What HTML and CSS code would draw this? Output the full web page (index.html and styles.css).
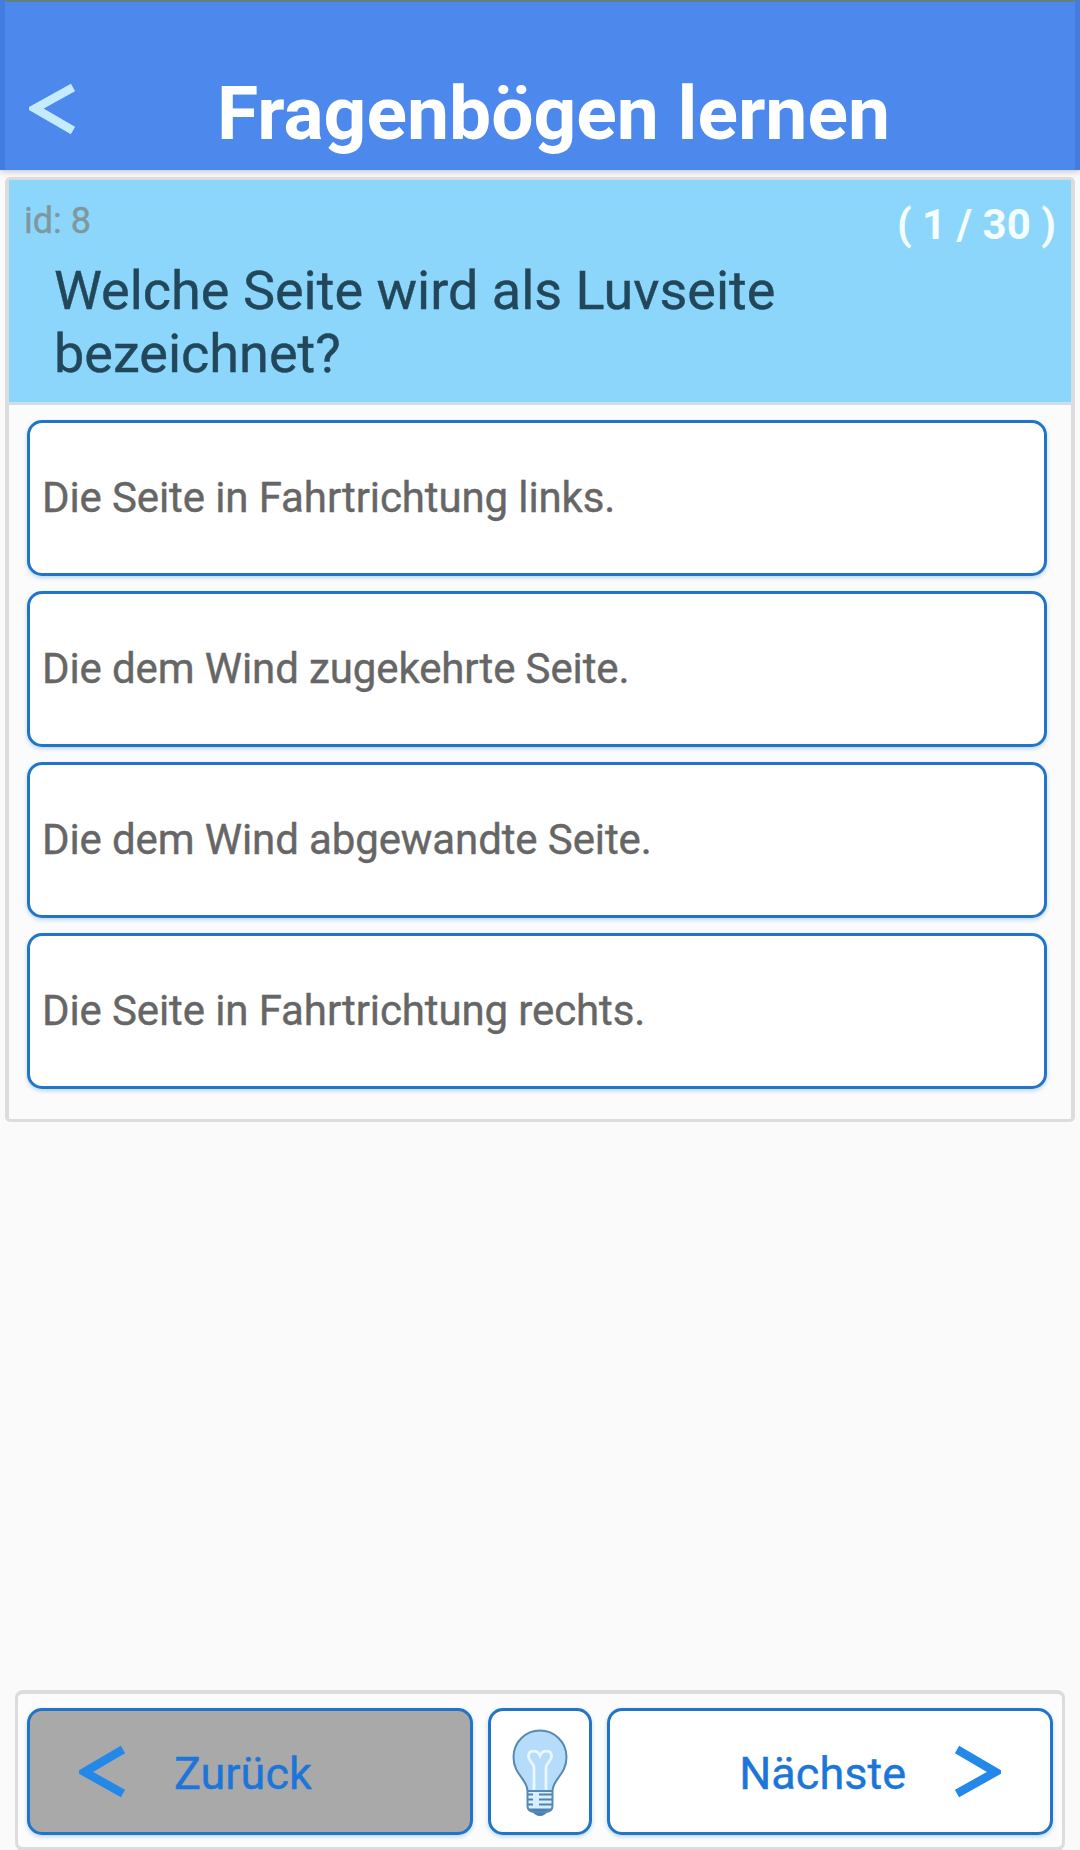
FILE: index.html
```html
<!DOCTYPE html>
<html lang="de">
<head>
<meta charset="utf-8">
<title>Fragenbögen lernen</title>
<link rel="stylesheet" href="styles.css">
</head>
<body>
<div class="app">
  <header class="header">
    <svg class="header-back" viewBox="0 0 46 52"><path d="M44 4.500 L6 25.500 L44 47.500" /></svg>
    <h1 class="title">Fragenbögen lernen</h1>
  </header>
  <main class="card">
    <section class="question">
      <div class="meta"><span class="id">id: 8</span><span class="count">( 1 / 30 )</span></div>
      <h2 class="text">Welche Seite wird als Luvseite<br>bezeichnet?</h2>
    </section>
    <div class="options">
      <div class="option"><span>Die Seite in Fahrtrichtung links.</span></div>
      <div class="option"><span>Die dem Wind zugekehrte Seite.</span></div>
      <div class="option"><span>Die dem Wind abgewandte Seite.</span></div>
      <div class="option"><span>Die Seite in Fahrtrichtung rechts.</span></div>
    </div>
  </main>
  <footer class="footer">
    <div class="button prev">
      <svg class="chevron" viewBox="0 0 46 53"><path d="M44 4.500 L5.500 27 L44 48.500" /></svg>
      <span class="label">Zurück</span>
    </div>
    <div class="button hint">
      <svg class="bulb" viewBox="0 0 56 88">
        <path d="M15.500 62 C15.500 50 1.500 46 1.500 28 A26.500 26.500 0 0 1 54.500 28 C54.500 46 40.500 50 40.500 62 Z" fill="#b5dcfb"/>
        <path d="M22 62 V39 C22 34 16.500 32 16.500 27.500 C16.500 20.500 25.500 20.500 28 26.500 C30.500 20.500 39.500 20.500 39.500 27.500 C39.500 32 34 34 34 39 V62" fill="none" stroke="#e9f7ff" stroke-width="2.800"/>
        <path d="M15.500 62 H40.500 V77 Q40.500 82 34 83 H22 Q15.500 82 15.500 77 Z" fill="#d9efff"/>
        <path d="M15.500 65.500 H21 M15.500 70.500 H21 M15.500 75.500 H21 M27 65.500 H40.500 M27 70.500 H40.500 M27 75.500 H40.500 M16 80.500 H40" stroke="#4e83b1" stroke-width="2"/>
        <path d="M19 81 H37 Q33 87 28 87 Q23 87 19 81 Z" fill="#4681b7"/>
        <path d="M15.500 62 C15.500 50 1.500 46 1.500 28 A26.500 26.500 0 0 1 54.500 28 C54.500 46 40.500 50 40.500 62 V77 Q40.500 82 34 83 H22 Q15.500 82 15.500 77 Z M15.500 62 H40.500" fill="none" stroke="#5789b3" stroke-width="2"/>
      </svg>
    </div>
    <div class="button next">
      <span class="label">Nächste</span>
      <svg class="chevron" viewBox="0 0 46 53"><path d="M2 4.500 L40.500 27 L2 48.500" /></svg>
    </div>
  </footer>
</div>
</body>
</html>
```
FILE: styles.css
```css
* { box-sizing: border-box; }
body { margin: 0; font-family: Roboto, sans-serif; background: #fafafa; }
.app { height: 1850px; display: flex; flex-direction: column; overflow: hidden; }

.header {
  height: 170px;
  flex: none;
  display: flex;
  background: #4d88ec;
  border: solid #437cdf;
  border-width: 0 5px;
  padding-left: 24px;
  box-shadow: inset 0 2px #61807f, 0 1px 7px #bbb;
}
.header-back { width: 46px; height: 52px; margin-top: 83px; }
.header-back path { fill: none; stroke: #c5ebff; stroke-width: 8.500; }
.title { margin: 69px 0 0 142px; font-size: 75px; line-height: 88px; font-weight: 700; color: #fff; white-space: nowrap; }

.card {
  margin: 7px 5px 0;
  height: 945px;
  flex: none;
  background: #fbfbfb;
  border: solid #dcdcdc;
  border-width: 3px 4px;
  border-radius: 5px;
}
.question { height: 225px; background: #8cd6fb; border-bottom: 3px solid #cbdfe8; }
.meta { height: 77px; display: flex; justify-content: space-between; padding: 0 15px 0 15px; }
.id { margin-top: 19px; font-size: 36px; line-height: 44px; color: #7f979f; -webkit-text-stroke: 0.400px; }
.count { margin-top: 20px; font-size: 42px; line-height: 50px; font-weight: 700; color: #f4fdff; white-space: nowrap; }
.text { margin: 2px 0 0 45px; font-size: 54px; line-height: 63px; font-weight: 400; color: #23475a; -webkit-text-stroke: 0.400px; }
.options { padding: 15px 24px 0 18px; display: flex; flex-direction: column; gap: 15px; }
.option {
  height: 156px;
  display: flex;
  align-items: center;
  padding: 0 0 1px 12px;
  font-size: 42px;
  letter-spacing: -0.110px;
  color: #666;
  -webkit-text-stroke: 0.400px;
}
.option, .button {
  background: #fff;
  border: 3px solid #2275c6;
  border-radius: 15px;
  box-shadow: 0 2px 4px #bcd8f4;
}

.footer {
  margin: auto 15px -1px;
  height: 161px;
  flex: none;
  display: grid;
  grid-template-columns: 446px 104px 446px;
  gap: 15px;
  padding: 14px 9px 0;
  background: #fcfcfc;
  border: solid #dcdcdc;
  border-width: 4px 3px;
  border-radius: 8px;
}
.button { height: 127px; display: flex; align-items: center; font-size: 45px; color: #1c75d8; }
.label { padding-top: 4px; -webkit-text-stroke: 0.400px; }
.chevron { width: 46px; height: 53px; flex: none; }
.chevron path { fill: none; stroke: #2388e8; stroke-width: 8.500; }
.prev { background: #a9a9a9; padding-left: 49px; gap: 49px; }
.hint { justify-content: center; padding-top: 2px; }
.bulb { width: 56px; height: 88px; }
.next { justify-content: flex-end; padding-right: 49px; gap: 49px; }
```
